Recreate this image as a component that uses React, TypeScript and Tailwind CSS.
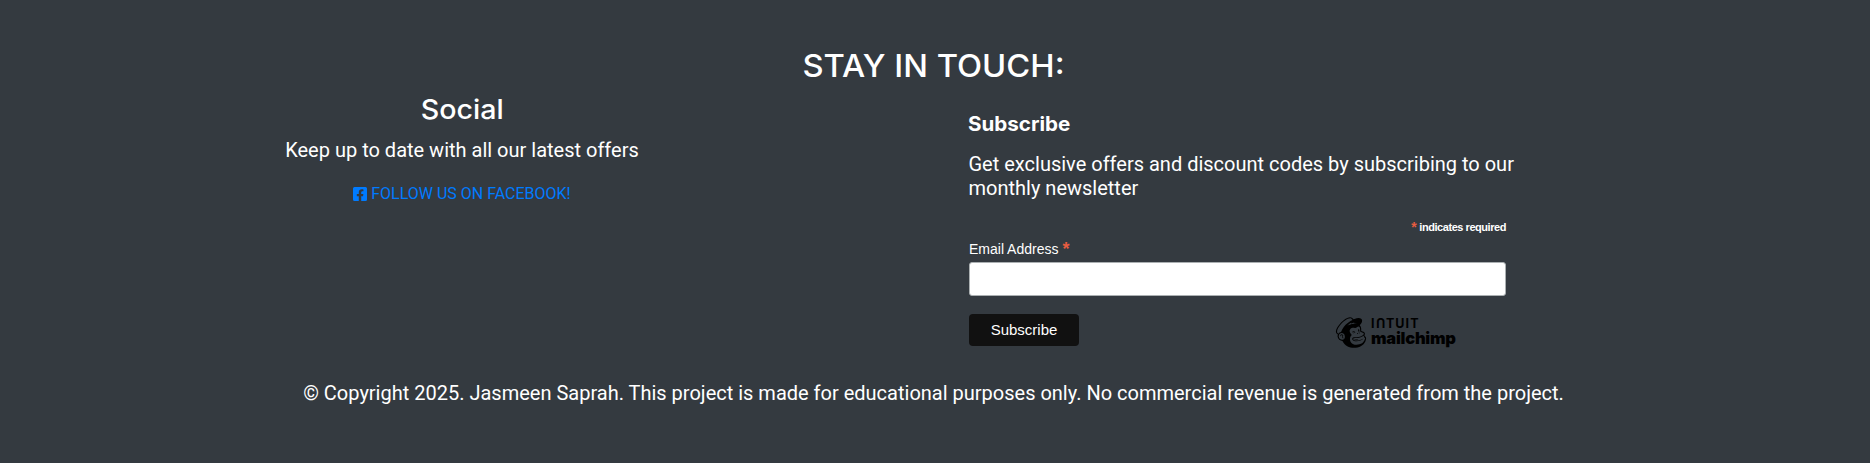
import { FaFacebookSquare, FaMailchimp } from "react-icons/fa";

function Logo() {
  return (
    <div className="flex h-[35px] w-[121px] gap-[4px] text-black">
      <FaMailchimp className="mt-px h-[35px] w-[32px] shrink-0" preserveAspectRatio="none" />
      <div className="flex flex-col font-['Inter',sans-serif]">
        <div className="mt-[4px] flex h-[12px] text-[12.5px] leading-[12px] font-bold tracking-[1.1px]">
          <span>I</span>
          <span className="mr-[1.1px] -ml-[1.1px] -translate-y-[2px] rotate-180">U</span>
          <span>TUIT</span>
        </div>
        <span className="text-[16.5px] leading-[17px] font-black tracking-[-0.25px]">mailchimp</span>
      </div>
    </div>
  );
}

export default function App() {
  return (
    <footer className="flex h-[463px] flex-col bg-[#343a40] pr-[3px] font-['Roboto',sans-serif] text-white">
      <h2 className="mt-[47px] scale-x-[1.055] text-center font-['Inter',sans-serif] text-[31px] leading-[38px] font-medium">
        STAY IN TOUCH:
      </h2>
      <div className="flex h-[284px] pl-[262px]">
        <section className="flex w-[400px] flex-col items-center pt-[8px]">
          <h3 className="scale-x-[1.06] font-['Inter',sans-serif] text-[27px] leading-[34px] font-medium">Social</h3>
          <p className="mt-[11px] text-[20px] leading-[24px]">Keep up to date with all our latest offers</p>
          <a className="mt-[20px] flex items-center gap-[3px] text-[16px] leading-[24px] text-[#007bff]">
            <FaFacebookSquare className="-ml-px size-[16px]" />
            FOLLOW US ON FACEBOOK!
          </a>
        </section>
        <section className="ml-[307px] w-[560px] pt-[27px] font-['Liberation_Sans',sans-serif]">
          <h4 className="-ml-px origin-left scale-x-[1.03] font-['Inter',sans-serif] text-[20px] leading-[24px] font-bold">
            Subscribe
          </h4>
          <p className="mt-[16px] -ml-[0.5px] font-['Roboto',sans-serif] text-[20px] leading-[24px]">
            Get exclusive offers and discount codes by subscribing to our monthly newsletter
          </p>
          <form className="w-[537px]">
            <div className="mt-[19px] flex h-[16px] items-center justify-end gap-[3px] text-[11px] font-bold tracking-[-0.45px]">
              <span className="text-[14px] leading-[14px] text-[#e85c41]">*</span>
              indicates required
            </div>
            <label className="mt-[3px] flex h-[22px] gap-[4px] text-[14px] leading-[22px]">
              Email Address <span className="text-[18px] font-bold text-[#e85c41]">*</span>
            </label>
            <input className="mt-[2px] block h-[34px] w-full rounded-[3px] border border-[#abb0b2] bg-white" />
            <div className="mt-[18px] flex">
              <button type="button" className="h-[32px] w-[110px] rounded-[4px] bg-[#111111] text-[15px]">
                Subscribe
              </button>
              <div className="ml-[256px]">
                <Logo />
              </div>
            </div>
          </form>
        </section>
      </div>
      <p className="mt-[12px] text-center text-[20px] leading-[24px]">
        © Copyright 2025. Jasmeen Saprah. This project is made for educational purposes only. No commercial revenue is
        generated from the project.
      </p>
    </footer>
  );
}
